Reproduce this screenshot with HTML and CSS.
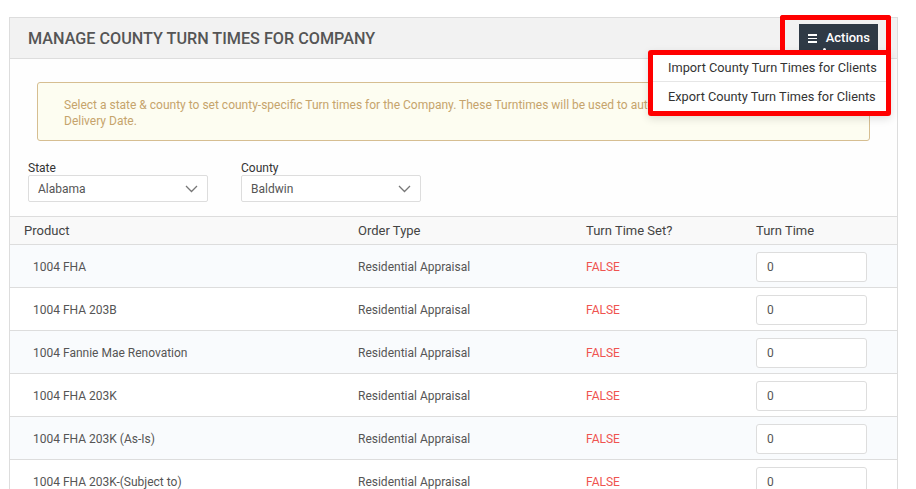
FILE: index.html
```html
<!DOCTYPE html>
<html lang="en">
<head>
    <meta charset="UTF-8">
    <meta name="viewport" content="width=device-width, initial-scale=1.0">
    <title>Manage County Turn Times</title>
    <link rel="stylesheet" href="styles.css">
</head>
<body>
    <div class="page">
        <div class="panel">
            <!-- Panel Header -->
            <div class="panel-header">
                <h2 class="panel-title">Manage County Turn Times for Company</h2>
                <button class="actions-btn" type="button">
                    <span class="bars"><i></i><i></i><i></i></span>
                    Actions
                    <span class="caret"></span>
                </button>
                <div class="highlight-btn"></div>
                <ul class="actions-menu">
                    <li><a href="#">Import County Turn Times for Clients</a></li>
                    <li><a href="#">Export County Turn Times for Clients</a></li>
                </ul>
            </div>

            <!-- Panel Body -->
            <div class="panel-body">
                <div class="alert">
                    Select a state &amp; county to set county-specific Turn times for the Company. These Turntimes will be used to automatically calculate the<br>
                    Delivery Date.
                </div>

                <div class="filters">
                    <div class="field">
                        <label>State</label>
                        <div class="select">
                            <span>Alabama</span>
                            <svg width="13" height="8" viewBox="0 0 13 8"><polyline points="1,1 6.5,6.5 12,1" fill="none" stroke="#777" stroke-width="1.3"/></svg>
                        </div>
                    </div>
                    <div class="field">
                        <label>County</label>
                        <div class="select">
                            <span>Baldwin</span>
                            <svg width="13" height="8" viewBox="0 0 13 8"><polyline points="1,1 6.5,6.5 12,1" fill="none" stroke="#777" stroke-width="1.3"/></svg>
                        </div>
                    </div>
                </div>
            </div>

            <!-- Turn Times Table -->
            <table class="turn-table">
                <thead>
                    <tr>
                        <th class="col-product">Product</th>
                        <th class="col-type">Order Type</th>
                        <th class="col-set">Turn Time Set?</th>
                        <th class="col-time">Turn Time</th>
                    </tr>
                </thead>
                <tbody id="turnRows"></tbody>
            </table>
        </div>
    </div>

    <script>
        const products = [
            '1004 FHA',
            '1004 FHA 203B',
            '1004 Fannie Mae Renovation',
            '1004 FHA 203K',
            '1004 FHA 203K (As-Is)',
            '1004 FHA 203K-(Subject to)'
        ];

        const tbody = document.getElementById('turnRows');
        products.forEach((name) => {
            const row = document.createElement('tr');
            row.innerHTML = `
                <td class="col-product">${name}</td>
                <td class="col-type">Residential Appraisal</td>
                <td class="col-set"><span class="false">FALSE</span></td>
                <td class="col-time"><input type="text" class="time-input" value="0"></td>
            `;
            tbody.appendChild(row);
        });
    </script>
</body>
</html>
```

FILE: styles.css
```css
:root {
    --border-color: #dddddd;
    --text-color: #555555;
    --dark-btn: #2f3a46;
    --alert-text: #c6a46c;
    --alert-bg: #fdfdf1;
    --alert-border: #d6be91;
    --false-color: #ef5350;
    --highlight: #ff0000;
}

body {
    font-family: Roboto, 'Liberation Sans', sans-serif;
    margin: 0;
    padding: 0;
    background-color: #ffffff;
    color: var(--text-color);
    font-size: 12px;
}

.page {
    padding: 17px 18px 0 9px;
}

.panel {
    border: 1px solid var(--border-color);
    background-color: #fefefe;
}

/* Header */
.panel-header {
    position: relative;
    display: flex;
    align-items: center;
    justify-content: space-between;
    height: 40px;
    padding: 0 19px 0 18px;
    background-color: #f2f2f2;
    border-bottom: 1px solid var(--border-color);
}

.panel-title {
    margin: 0;
    font-size: 16.2px;
    font-weight: 500;
    text-transform: uppercase;
    color: #555;
}

.actions-btn {
    position: relative;
    display: flex;
    align-items: flex-start;
    gap: 9px;
    box-sizing: border-box;
    height: 30px;
    margin-top: 2px;
    padding: 6px 8px 0 9px;
    border: none;
    background-color: var(--dark-btn);
    color: #fff;
    font-family: inherit;
    font-size: 13px;
    line-height: 15px;
    font-weight: 500;
}

.bars {
    display: flex;
    flex-direction: column;
    gap: 2px;
    margin-top: 4px;
}

.bars i {
    display: block;
    width: 9px;
    height: 1.5px;
    background-color: #fff;
}

.caret {
    position: absolute;
    left: 24px;
    bottom: 3px;
    width: 3px;
    height: 3px;
    border-radius: 50%;
    background-color: #fff;
}

/* Red annotation around the button */
.highlight-btn {
    position: absolute;
    left: 770px;
    top: -3px;
    width: 111px;
    height: 40px;
    box-sizing: border-box;
    border: 5px solid var(--highlight);
    border-bottom: none;
    border-radius: 3px 3px 0 0;
    z-index: 2;
}

.actions-menu {
    position: absolute;
    left: 638px;
    top: 32px;
    width: 243px;
    box-sizing: border-box;
    margin: 0;
    padding: 0;
    list-style: none;
    background-color: #fff;
    border: 5px solid var(--highlight);
    border-radius: 3px;
    box-shadow: 0 3px 8px rgba(0,0,0,0.12);
    z-index: 3;
}

.actions-menu li + li {
    border-top: 1px solid #e6e6e6;
}

.actions-menu a {
    display: block;
    padding: 0 0 0 15px;
    line-height: 26px;
    font-size: 12.75px;
    color: #333;
    text-decoration: none;
}

.actions-menu li + li a {
    line-height: 29px;
}

/* Body */
.panel-body {
    padding: 23px 18px 14px 18px;
}

.alert {
    margin: 0 9px 0 9px;
    padding: 14px 26px 11px 26px;
    background-color: var(--alert-bg);
    border: 1px solid var(--alert-border);
    border-radius: 3px;
    color: var(--alert-text);
    font-size: 12px;
    line-height: 16px;
}

.filters {
    display: flex;
    gap: 33px;
    margin-top: 20px;
}

.field label {
    display: block;
    font-size: 12px;
    color: #333;
    line-height: 14px;
}

.select {
    display: flex;
    align-items: center;
    justify-content: space-between;
    box-sizing: border-box;
    width: 180px;
    height: 27px;
    padding: 1px 9px 0 9px;
    border: 1px solid var(--border-color);
    border-radius: 2px;
    background-color: #fff;
    color: #555;
}

/* Table */
.turn-table {
    width: 100%;
    border-collapse: collapse;
    table-layout: fixed;
}

.turn-table th {
    height: 27px;
    padding: 0;
    text-align: left;
    font-size: 13px;
    font-weight: normal;
    color: #444;
    background-color: #f9f9f9;
    border-top: 1px solid var(--border-color);
    border-bottom: 1px solid var(--border-color);
}

.turn-table td {
    height: 40px;
    padding: 2px 0 0 0;
    border-bottom: 1px solid var(--border-color);
    color: #555;
}

.turn-table tbody tr:nth-child(odd) {
    background-color: #f9fbfd;
}

.turn-table tbody tr:nth-child(even) {
    background-color: #ffffff;
}

th.col-product { width: 334px; padding-left: 14px; }
td.col-product { padding-left: 23px; }
.col-type { width: 228px; }
.col-set { width: 170px; }

.false {
    color: var(--false-color);
}

.time-input {
    box-sizing: border-box;
    width: 111px;
    height: 30px;
    padding: 0 10px;
    border: 1px solid var(--border-color);
    border-radius: 3px;
    font-family: inherit;
    font-size: 12px;
    color: #555;
    background-color: #fff;
}
```
